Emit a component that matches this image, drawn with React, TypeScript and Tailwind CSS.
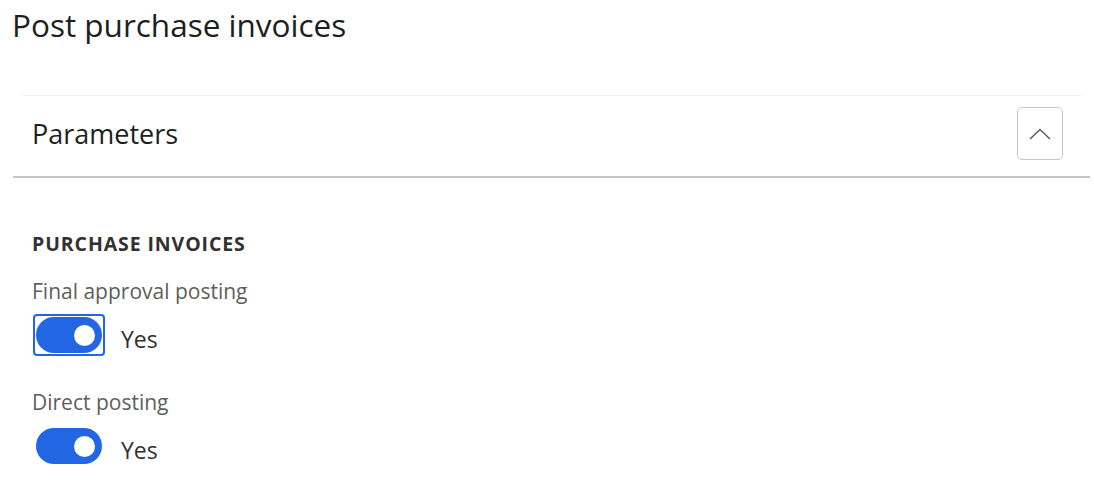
import { useState } from "react";

function Toggle({ focused, on }: { focused?: boolean; on: boolean }) {
  return (
    <div
      className={`flex items-center rounded-[4px] p-px ${
        focused ? "border-2 border-[#2266e3]" : "border-2 border-transparent"
      }`}
    >
      <div
        className={`flex h-[36px] w-[66px] items-center rounded-full px-[7px] ${
          on ? "justify-end bg-[#2266e3]" : "justify-start bg-[#c8c6c4]"
        }`}
      >
        <div className="h-[21px] w-[21px] rounded-full bg-white" />
      </div>
    </div>
  );
}

function ToggleField({ label, focused }: { label: string; focused?: boolean }) {
  const [on, setOn] = useState(true);
  return (
    <div className="flex flex-col">
      <div className="text-[21px] leading-[28px] text-[#605e5c]">{label}</div>
      <div className="mt-[9px] ml-px flex items-center gap-[16px]" onClick={() => setOn(!on)}>
        <Toggle focused={focused} on={on} />
        <span className="mt-[8px] text-[23px] leading-[30px] text-[#323130]">{on ? "Yes" : "No"}</span>
      </div>
    </div>
  );
}

export default function App() {
  return (
    <div
      className="h-[496px] w-[1094px] overflow-hidden bg-white text-[#323130]"
      style={{ fontFamily: '"Open Sans", "Noto Sans", sans-serif' }}
    >
      <h1 className="pl-[12px] pt-[3px] text-[31.5px] leading-[44px] text-[#201f1e]">Post purchase invoices</h1>

      <div className="mt-[48px] pl-[13px] pr-[4px]">
        <div className="ml-[9px] mr-[8px] h-px bg-[#f3f2f1]" />
        <div className="flex items-center justify-between pl-[19px] pr-[27px] pt-[11px] pb-[16px]">
          <span className="text-[27px] leading-[32px] text-[#201f1e]">Parameters</span>
          <button className="flex h-[53px] w-[46px] items-center justify-center rounded-[5px] border border-[#c8c6c4] bg-white">
            <svg width="22" height="12" viewBox="0 0 22 12" fill="none">
              <path d="M1 11 L11 1.5 L21 11" stroke="#605e5c" strokeWidth="1.5" />
            </svg>
          </button>
        </div>
        <div className="h-[2px] bg-[#c8c6c4]" />
      </div>

      <div className="px-[32px] pt-[53px]">
        <div className="text-[19.5px] font-bold leading-[26px] tracking-[0.9px] text-[#323130]">PURCHASE INVOICES</div>
        <div className="mt-[20px] flex flex-col gap-[32px]">
          <ToggleField label="Final approval posting" focused />
          <ToggleField label="Direct posting" />
        </div>
      </div>
    </div>
  );
}
